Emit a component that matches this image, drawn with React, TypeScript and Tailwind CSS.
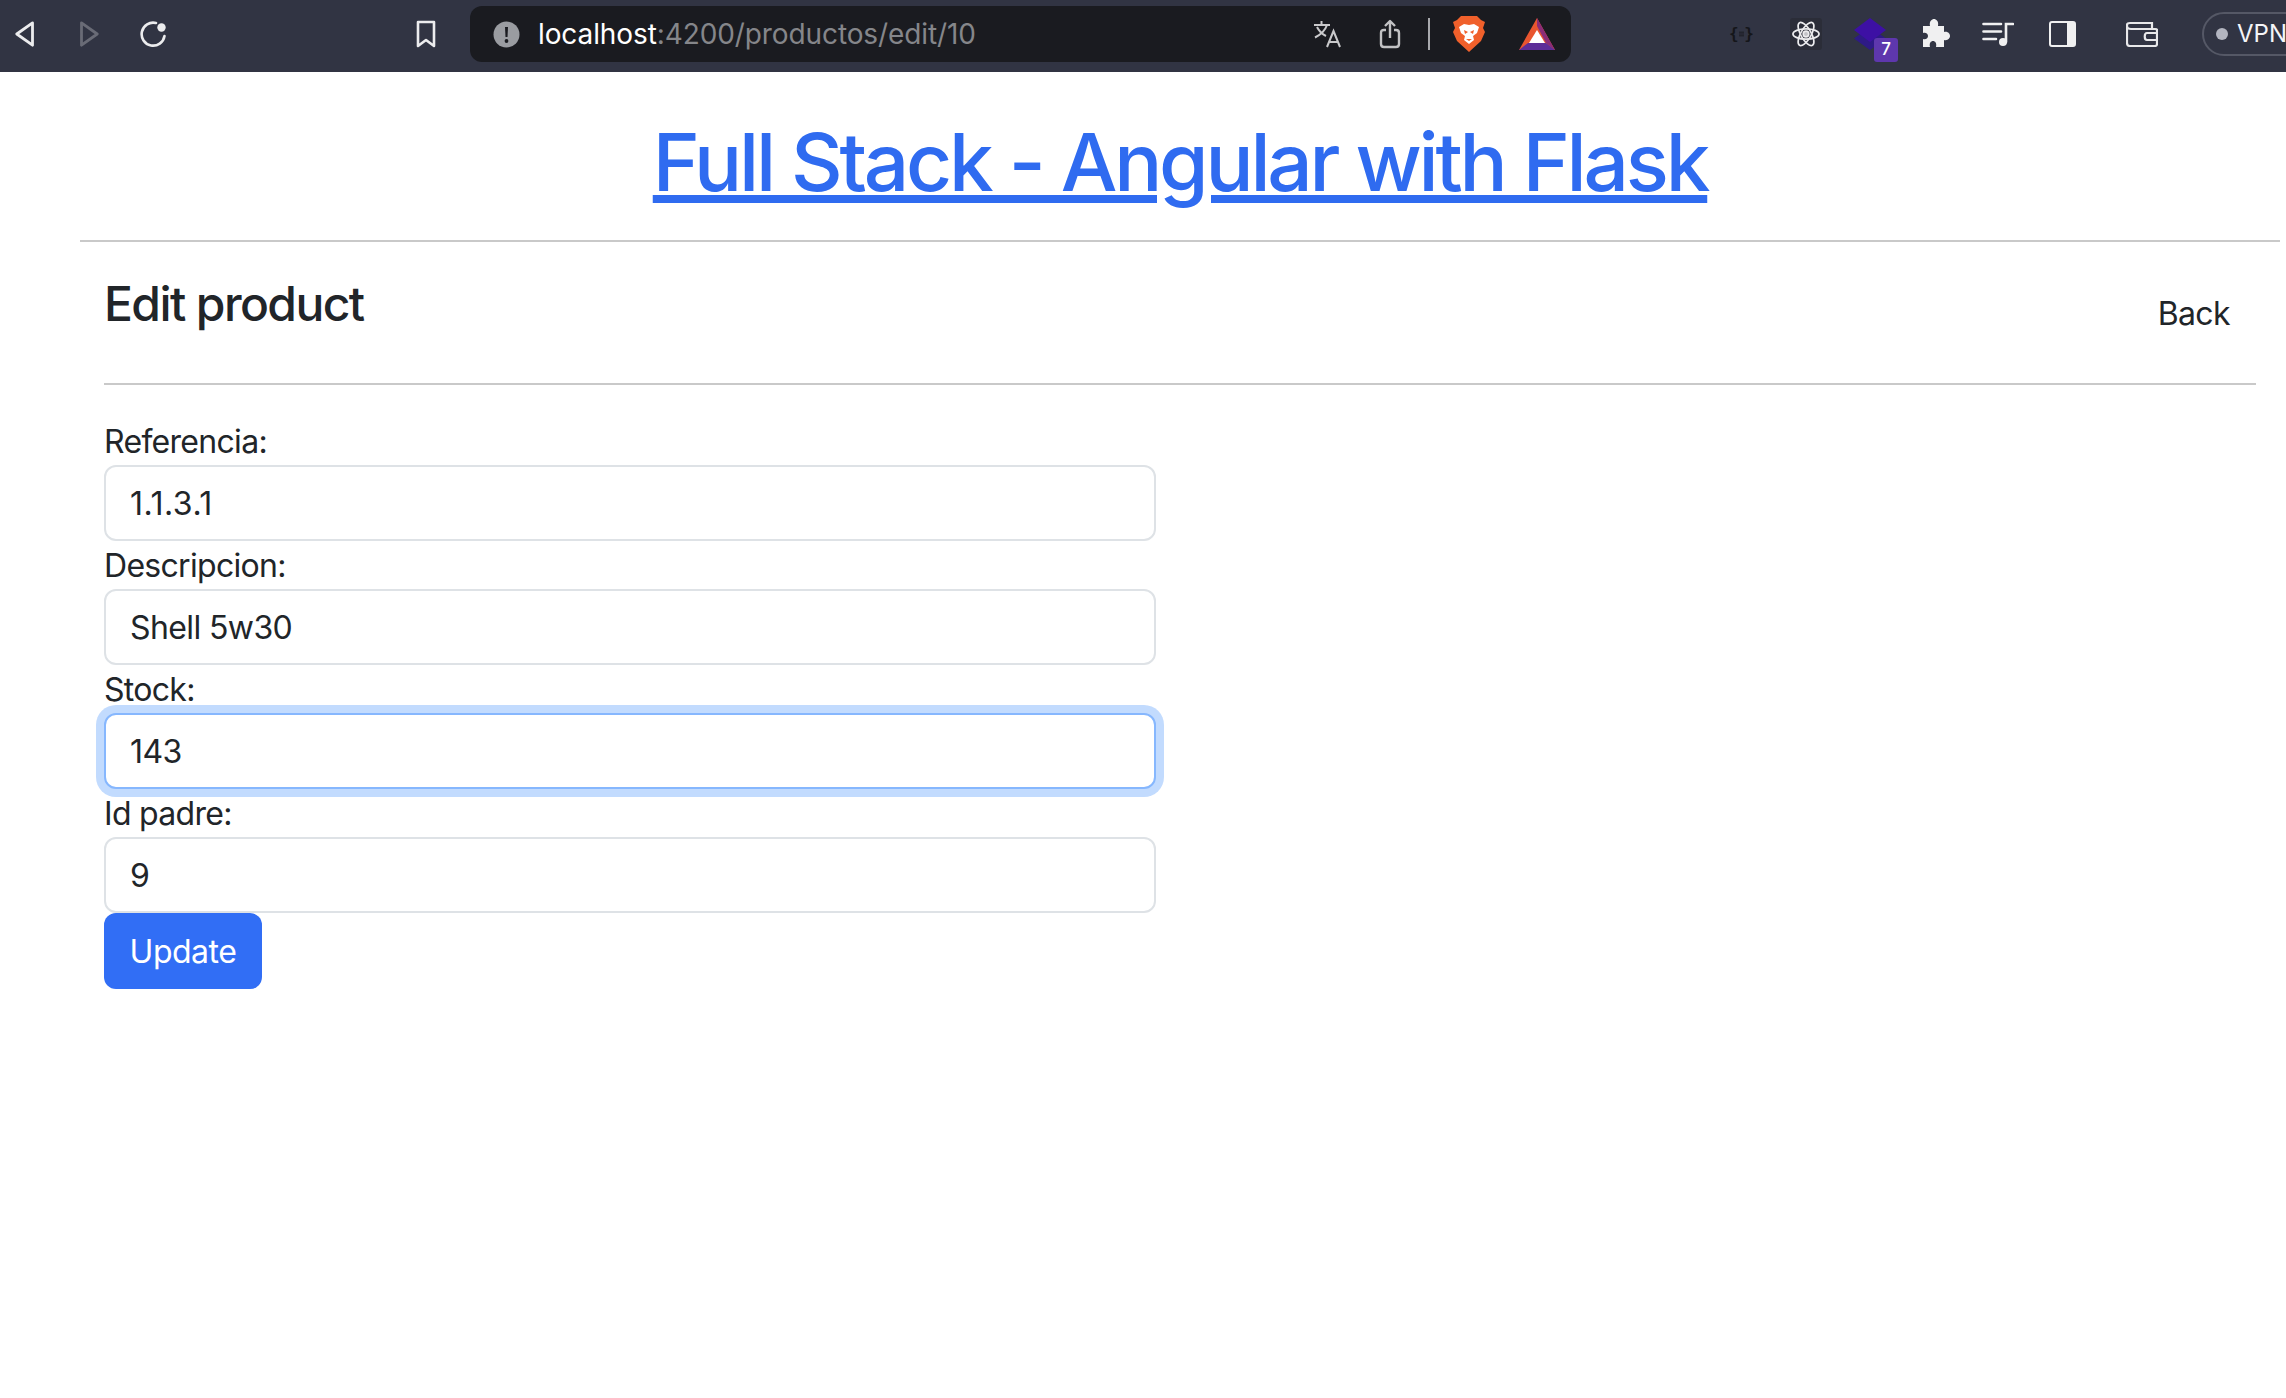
const Field = ({ label, value, focus, wide }: { label: string; value: string; focus?: boolean; wide?: boolean }) => (
  <div className="flex flex-col">
    <label className="h-[48px] text-[32px] leading-[50px] tracking-[-0.7px] text-[#212529]">{label}</label>
    <input
      readOnly
      value={value}
      className={
        (focus
          ? "border-[#86b7fe] shadow-[0_0_0_8px_rgba(13,110,253,0.25)] "
          : "border-[#dee2e6] ") +
        (wide ? "tracking-[0.5px] " : "tracking-[-0.6px] ") +
        "h-[76px] w-full rounded-[12px] border-2 bg-white px-[24px] text-[32px] text-[#212529] outline-none"
      }
    />
  </div>
);

const Stroke = "#ececee";

export default function App() {
  return (
    <div className="min-h-[1398px] overflow-hidden bg-white font-['Inter','Liberation_Sans',sans-serif]">
      <header className="flex h-[72px] items-center bg-[#313443] pb-[4px] [&>*]:shrink-0">
        <svg className="ml-[15px] h-[26px] w-[20px]" viewBox="0 0 20 26" fill="none" stroke={Stroke} strokeWidth="2.8" strokeLinejoin="round"><path d="M17.5 1.8 L1.8 13 L17.5 24.2 Z" /></svg>
        <svg className="ml-[44px] h-[26px] w-[20px]" viewBox="0 0 20 26" fill="none" stroke="#696b76" strokeWidth="2.8" strokeLinejoin="round"><path d="M2.5 1.8 L18.2 13 L2.5 24.2 Z" /></svg>
        <svg className="ml-[40px] h-[26px] w-[28px]" viewBox="0 0 28 26" fill="none"><path d="M17 2 A11.5 11.5 0 1 0 25.5 15" stroke={Stroke} strokeWidth="2.6" strokeLinecap="round" /><circle cx="22.5" cy="6.5" r="4.2" fill={Stroke} /></svg>
        <svg className="ml-[249px] h-[28px] w-[20px]" viewBox="0 0 20 28" fill="none" stroke={Stroke} strokeWidth="2.6" strokeLinejoin="round"><path d="M2 2 H18 V26 L10 20 L2 26 Z" /></svg>

        <div className="ml-[34px] flex h-[56px] w-[1101px] items-center rounded-[12px] bg-[#1a1b20] [&>*]:shrink-0">
          <svg className="ml-[23px] h-[27px] w-[27px]" viewBox="0 0 27 27"><circle cx="13.5" cy="13.5" r="13" fill="#9a9ca1" /><path d="M12 6 H15 L14.5 16 H12.5 Z" fill="#1a1b20" /><circle cx="13.5" cy="20" r="1.9" fill="#1a1b20" /></svg>
          <span className="ml-[18px] w-[437px] whitespace-nowrap text-[28px] tracking-[-0.1px] text-white">
            localhost<span className="text-[#85868a]">:4200/productos/edit/10</span>
          </span>
          <svg className="ml-[338px] h-[28px] w-[28px]" viewBox="0 0 28 28" fill="none" stroke="#c9c9cb" strokeWidth="2"><path d="M1 5 H17 M8.5 1 V5 M14 5 C12 11 7 15 2 17.5 M4 7 C6 11 9 14 13 16" /><path d="M14 27 L20.5 11 L27 27 M16 22 H25" /></svg>
          <svg className="ml-[38px] h-[30px] w-[22px]" viewBox="0 0 22 30" fill="none" stroke="#c2c2c4" strokeWidth="2.4" strokeLinejoin="round"><path d="M7 11 H5 C3 11 2 12 2 14 V25 C2 27 3 28 5 28 H17 C19 28 20 27 20 25 V14 C20 12 19 11 17 11 H15" /><path d="M11 19 V2 M6 7 L11 2 L16 7" /></svg>
          <div className="ml-[27px] h-[32px] w-[2px] bg-[#a8a9ad]" />
          <svg className="ml-[23px] h-[36px] w-[32px]" viewBox="0 0 32 36"><path d="M8 0 H24 L28 4 L32 6 L30 12 L32 16 L28 25 L16 36 L4 25 L0 16 L2 12 L0 6 L4 4 Z" fill="#f0602b" /><path d="M6 11 L11 8 L16 9 L21 8 L26 11 L24 17 L20 20 L21 24 L16 28 L11 24 L12 20 L8 17 Z" fill="#fff" /><path d="M11 14 L15 16 L12 18 Z M21 14 L17 16 L20 18 Z M13 23 H19 L16 25 Z" fill="#f0602b" /></svg>
          <svg className="ml-[34px] h-[32px] w-[36px]" viewBox="0 0 36 32"><path d="M18 0 L36 32 H0 Z" fill="#e9552f" /><path d="M18 0 L36 32 L27 25 L18 8 Z" fill="#8a2c78" /><path d="M0 32 L9 25 H27 L36 32 Z" fill="#5d2d98" /><path d="M18 12 L26 25 H10 Z" fill="#fff" /></svg>
        </div>

        <div className="ml-[158px] flex w-[25px] items-center justify-between font-['DejaVu_Sans_Mono',monospace] text-[16px] font-bold leading-[16px] text-[#15161a]">
          <span>{"{"}</span>
          <svg className="h-[10px] w-[11px]" viewBox="0 0 11 10" fill="none" stroke="#15161a" strokeWidth="1.5"><path d="M0 1.5 H11 M0 5 H11 M0 8.5 H11" /></svg>
          <span>{"}"}</span>
        </div>
        <div className="ml-[36px] flex h-[32px] w-[32px] items-center justify-center rounded-[3px] bg-[#2b2d38]">
          <svg className="h-[28px] w-[28px]" viewBox="0 0 30 30" fill="none" stroke={Stroke} strokeWidth="1.8"><ellipse cx="15" cy="15" rx="14" ry="5.5" /><ellipse cx="15" cy="15" rx="14" ry="5.5" transform="rotate(60 15 15)" /><ellipse cx="15" cy="15" rx="14" ry="5.5" transform="rotate(120 15 15)" /><circle cx="15" cy="15" r="3" fill="#c4c4c8" /></svg>
        </div>
        <div className="relative ml-[32px] h-[32px] w-[32px]">
          <svg className="h-[32px] w-[32px]" viewBox="0 0 32 32"><path d="M16 9 L32 20.5 L16 32 L0 20.5 Z" fill="#2e1a86" /><path d="M16 0 L32 12 L16 24 L0 12 Z" fill="#3d10a4" /></svg>
          <span className="absolute left-[20px] top-[20px] flex h-[24px] w-[24px] items-center justify-center rounded-[3px] bg-[#5e37ad] text-[17px] font-medium text-white">7</span>
        </div>
        <svg className="ml-[34px] h-[30px] w-[30px]" viewBox="0 0 30 30"><path d="M3 7 H10 C9 2 12 0 14 0 C16 0 19 2 18 7 H24 V13 C28 12 30 15 30 17 C30 19 28 22 24 21 V28 H16 C17 24 15 22 13 22 C11 22 9 24 10 28 H3 V20 C6 21 8 19 8 17 C8 15 6 13 3 14 Z" fill="#f0f0f1" /></svg>
        <svg className="ml-[32px] h-[24px] w-[32px]" viewBox="0 0 32 24" fill="none" stroke="#f0f0f1" strokeWidth="2.6" strokeLinecap="round"><path d="M1.5 2 H19 M1.5 9.5 H19 M1.5 17 H14" /><path d="M24 20 V2 H31" /><circle cx="21" cy="20" r="4" fill="#f0f0f1" stroke="none" /></svg>
        <svg className="ml-[35px] h-[26px] w-[27px]" viewBox="0 0 27 26" fill="none"><rect x="1" y="1" width="25" height="24" rx="2" stroke="#f0f0f1" strokeWidth="2" /><rect x="18" y="1" width="8" height="24" fill="#f0f0f1" /></svg>
        <svg className="ml-[50px] h-[26px] w-[32px]" viewBox="0 0 32 26" fill="none" stroke="#e8e8ea" strokeWidth="2.2"><path d="M4 2 H26 V7 M31 9 V23 C31 24 30 25 29 25 H4 C2 25 1 24 1 22 V4 C1 3 2 2 4 2 M1 5 C1 7 3 8 5 8 H29 C30 8 31 8 31 9" /><path d="M31 12 H21 C18 12 18 19 21 19 H31" /></svg>
        <div className="ml-[44px] flex h-[44px] w-[120px] items-center rounded-full border-2 border-[#555866] pl-[12px]">
          <span className="h-[12px] w-[12px] rounded-full bg-[#b3b5c0]" />
          <span className="ml-[9px] text-[24px] text-[#f4f5f8]">VPN</span>
        </div>
      </header>

      <main className="mx-[80px] w-[2200px]">
        <h1 className="pt-[42px] text-center text-[80px] font-medium leading-[96px] tracking-[-3.2px] text-[#2f6bf0]">
          <a className="underline" href="#">Full Stack - Angular with Flask</a>
        </h1>
        <hr className="mt-[30px] border-t-2 border-[#c9c9c9]" />
        <section className="px-[24px]">
          <div className="flex h-[141px] items-start justify-between">
            <h2 className="pt-[33px] text-[48px] font-medium leading-[58px] tracking-[-1.6px] text-[#212529]">Edit product</h2>
            <a className="mt-[48px] pr-[26px] text-[32px] leading-[48px] tracking-[-0.6px] text-[#212529]">Back</a>
          </div>
          <hr className="border-t-2 border-[#c9c9c9]" />
          <form className="mt-[32px] w-[1052px]">
            <Field label="Referencia:" value="1.1.3.1" wide />
            <Field label="Descripcion:" value="Shell 5w30" />
            <Field label="Stock:" value="143" focus />
            <Field label="Id padre:" value="9" />
            <button type="button" className="h-[76px] w-[158px] rounded-[12px] bg-[#316ef5] pt-[2px] text-[32px] tracking-[-0.5px] text-white">Update</button>
          </form>
        </section>
      </main>
    </div>
  );
}
